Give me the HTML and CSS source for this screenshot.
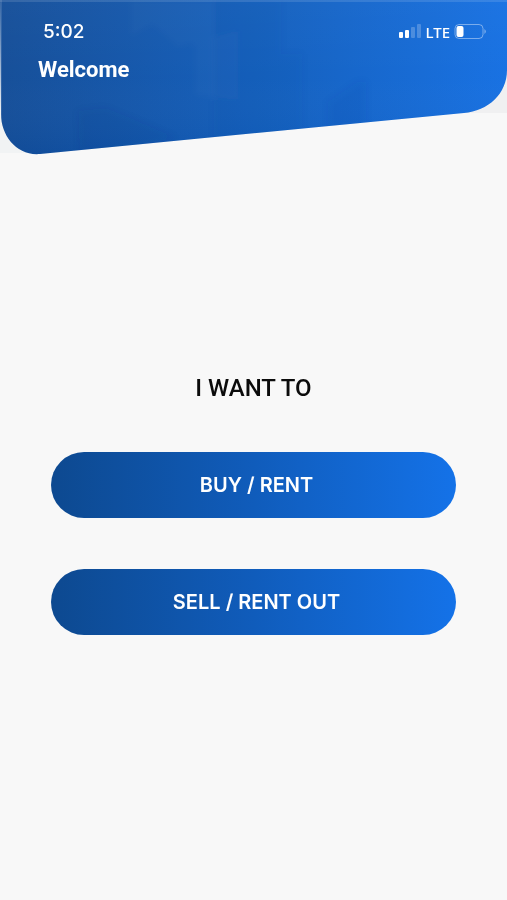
FILE: index.html
```html
<!DOCTYPE html>
<html lang="en">
<head>
<meta charset="utf-8">
<meta name="viewport" content="width=device-width, initial-scale=1">
<title>Welcome</title>
<link rel="stylesheet" href="styles.css">
</head>
<body>
<header class="header">
  <svg class="header-shape" viewBox="0 0 507 156" preserveAspectRatio="none" aria-hidden="true">
    <defs>
      <linearGradient id="blue" x1="0" y1="0" x2="1" y2="0">
        <stop offset="0" stop-color="#124c97"/>
        <stop offset=".5" stop-color="#115dbb"/>
        <stop offset="1" stop-color="#146fe2"/>
      </linearGradient>
      <linearGradient id="top-light" x1="0" y1="0" x2="0" y2="1">
        <stop offset="0" stop-color="#fff" stop-opacity=".04"/>
        <stop offset=".5" stop-color="#fff" stop-opacity=".02"/>
        <stop offset="1" stop-color="#003a8c" stop-opacity=".08"/>
      </linearGradient>
      <filter id="soft" x="-20%" y="-20%" width="140%" height="140%">
        <feGaussianBlur stdDeviation="3"/>
      </filter>
      <clipPath id="panel">
        <path d="M0 0H507V70C507 94 488 111 464 113L40 154C17 156 1 136 1 114Z"/>
      </clipPath>
    </defs>
    <path d="M0 100H60V153H0Z" fill="#f1f3f4"/>
    <path d="M450 60H507V113H450Z" fill="#f0f0f1"/>
    <g clip-path="url(#panel)">
      <path d="M0 0H507V156H0Z" fill="url(#blue)"/>
      <path d="M0 0H507V156H0Z" fill="url(#top-light)"/>
      <g filter="url(#soft)">
        <path d="M130 38L152 25L178 48L212 38V0H130Z" fill="#fff" opacity=".02"/>
        <path d="M78 111L105 108L135 120L176 138L80 156Z" fill="#063a83" opacity=".09"/>
        <path d="M194 42L238 30V100L194 96Z" fill="#fff" opacity=".02"/>
        <path d="M214 0H281V54H302V140H214Z" fill="#003f9e" opacity=".06"/>
        <path d="M328 102L358 82H366V127L328 130Z" fill="#003f9e" opacity=".09"/>
      </g>
      <path d="M0 0H507V2H0Z" fill="#fff" opacity=".12"/>
      <path d="M0 0H2V130H0Z" fill="#fff" opacity=".12"/>
    </g>
  </svg>
  <div class="status">
    <span class="time">5:02</span>
    <div class="indicators">
      <svg class="signal" width="23" height="16" viewBox="0 0 23 16" role="img" aria-label="Signal">
        <g fill="#fff">
          <rect x="0" y="8" width="4" height="6" rx="1"/>
          <rect x="6" y="6" width="4" height="8" rx="1"/>
          <rect x="12" y="3" width="4" height="11" rx="1" opacity=".22"/>
          <rect x="18" y="0" width="4" height="14" rx="1" opacity=".22"/>
        </g>
      </svg>
      <span class="network">LTE</span>
      <svg class="battery" width="33" height="16" viewBox="0 0 33 16" role="img" aria-label="Battery">
        <rect x="1" y="0.500" width="28" height="14" rx="4" fill="none" stroke="#fff" stroke-opacity=".42"/>
        <rect x="2.500" y="2" width="7" height="11" rx="2" fill="#fff"/>
        <path d="M30.500 5Q33 7.500 30.500 10Z" fill="#fff" opacity=".5"/>
      </svg>
    </div>
  </div>
  <h1 class="title">Welcome</h1>
</header>
<main class="main">
  <h2 class="prompt">I WANT TO</h2>
  <div class="choices">
    <button class="choice" type="button">BUY / RENT</button>
    <button class="choice" type="button">SELL / RENT OUT</button>
  </div>
</main>
</body>
</html>
```
FILE: styles.css
```css
* {
  box-sizing: border-box;
}

body {
  margin: 0;
  min-height: 100vh;
  background: #f8f8f8;
  color: #0b0b0b;
  font-family: Roboto, sans-serif;
}

.header {
  position: relative;
  height: 156px;
  padding: 20px 20px 0 38px;
  color: #fff;
}

.header-shape {
  position: absolute;
  inset: 0;
  z-index: -1;
  width: 100%;
  height: 100%;
}

.status {
  display: flex;
  align-items: center;
  justify-content: space-between;
  height: 24px;
  padding-left: 5px;
}

.time {
  font: 500 19px/24px Inter, sans-serif;
}

.indicators {
  display: flex;
  align-items: center;
  gap: 4px;
}

.network {
  font: 500 15px/24px "Noto Sans", sans-serif;
}

.title {
  margin: 12px 0 0;
  font-size: 22px;
  font-weight: 700;
  line-height: 28px;
}

.main {
  padding: 216px 51px 40px;
}

.prompt {
  margin: 0;
  font-size: 24px;
  font-weight: 500;
  line-height: 32px;
  text-align: center;
}

.choices {
  display: grid;
  gap: 51px;
  margin-top: 48px;
}

.choice {
  height: 66px;
  padding: 0 20px 0 26px;
  border: 0;
  border-radius: 33px;
  background: linear-gradient(90deg, #0d4990, #105cbb 50%, #1472e8);
  color: #fff;
  font: 600 20px/24px Inter, sans-serif;
}
```
